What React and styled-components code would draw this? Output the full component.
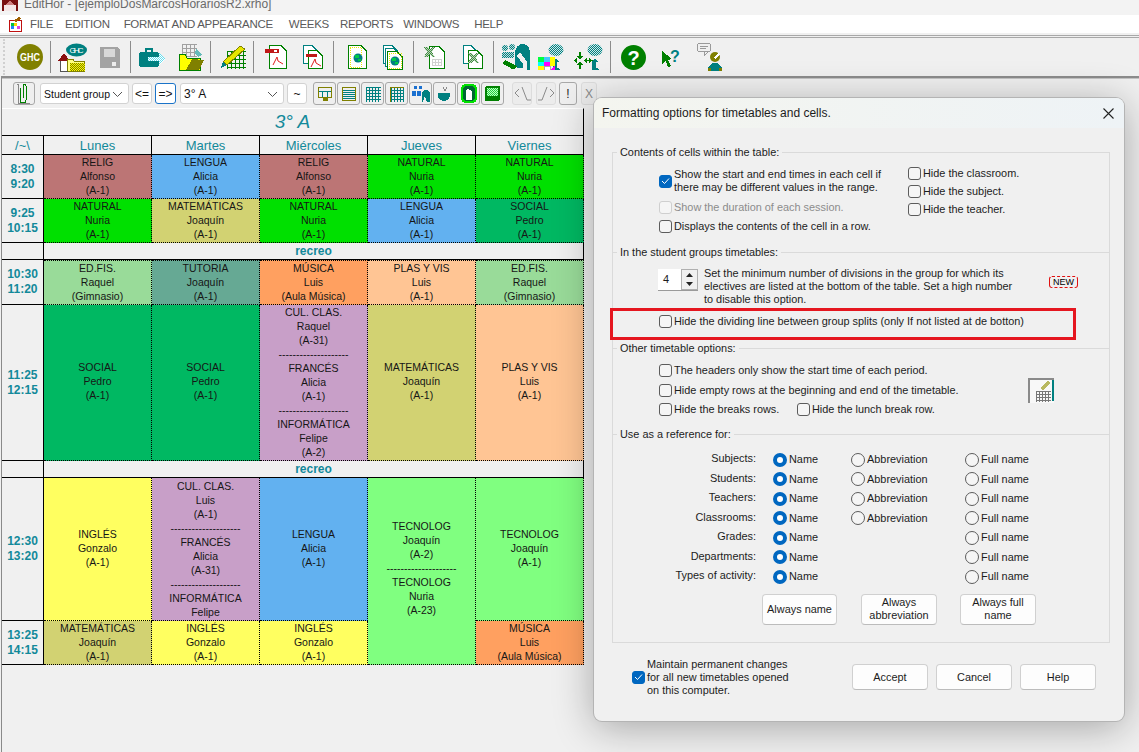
import React from "react";
import styled, { createGlobalStyle } from "styled-components";

const TEAL = "#008080";
const OLIVE = "#808000";
const GREEN = "#008000";
const FONT = '"Liberation Sans", Arial, sans-serif';

const GlobalStyle = createGlobalStyle`
  html, body { margin: 0; padding: 0; background: #f0f0f0; }
  * { box-sizing: border-box; }
`;

/* ---------- window chrome ---------- */
const Page = styled.div`
  position: relative;
  width: 1139px;
  height: 752px;
  overflow: hidden;
  background: #f0f0f0;
  font-family: ${FONT};
  display: flex;
  flex-direction: column;
`;

const TitleBar = styled.div`
  height: 15px;
  flex: none;
  background: #f3f3f3;
  display: flex;
  align-items: flex-start;
  gap: 6px;
  padding-left: 2px;
  overflow: hidden;
  color: #6a6a6a;
  font-size: 12px;
  line-height: 9px;
`;

const MenuBar = styled.div`
  height: 18px;
  flex: none;
  background: #fff;
  display: flex;
  align-items: center;
  padding-left: 8px;
  color: #5a5a5a;
  font-size: 11.5px;
  letter-spacing: -0.3px;
`;

const MenuItem = styled.span`
  margin-left: ${({ $ml }) => $ml}px;
  white-space: nowrap;
`;

const Rule = styled.div`
  height: 5px;
  flex: none;
  border-top: 2px solid #f0f0f0;
  border-bottom: 1px solid #a8a8a8;
  box-shadow: inset 0 1px 0 #a8a8a8;
`;

const MainBar = styled.div`
  height: 38px;
  flex: none;
  display: flex;
  align-items: center;
  padding-left: 3px;
`;

const Grip = styled.div`
  width: 14px;
  height: 36px;
  flex: none;
  border-left: 2px dotted #d0d0d0;
`;

const ToolGroup = styled.div`
  display: flex;
  align-items: center;
  gap: ${({ $gap }) => $gap || 0}px;
  padding: 0 ${({ $r }) => $r || 0}px 0 ${({ $l }) => $l}px;
`;

const ToolSep = styled.div`
  width: 1px;
  height: 32px;
  background: #8c8c8c;
  flex: none;
`;

const Frame = styled.div`
  flex: 1;
  margin-left: 1px;
  border-left: 1px solid #8a8a8a;
  border-top: 2px solid #8c8c8c;
  display: flex;
  flex-direction: column;
`;

const SmallBar = styled.div`
  height: 30px;
  flex: none;
  border-top: 1px solid #c4c4c4;
  display: flex;
  align-items: center;
  padding-left: 11px;
  font-size: 12px;
  color: #111;
`;

const IconButton = styled.div`
  width: ${({ $w }) => $w || 23}px;
  height: 23px;
  margin-left: ${({ $ml }) => $ml || 0}px;
  flex: none;
  border: 1px solid ${({ $soft }) => ($soft ? "#dcdcdc" : "#a8a8a8")};
  border-radius: 3px;
  background: ${({ $soft }) => ($soft ? "#ececec" : "#efefef")};
  color: ${({ $soft }) => ($soft ? "#8a8a8a" : "#222")};
  display: flex;
  align-items: center;
  justify-content: center;
`;

const Combo = styled.div`
  width: ${({ $w }) => $w}px;
  height: 21px;
  margin-left: ${({ $ml }) => $ml}px;
  flex: none;
  background: #fff;
  border: 1px solid #d2d2d2;
  border-radius: 3px;
  display: flex;
  align-items: center;
  padding-left: 3px;
  position: relative;
`;

const ComboText = styled.span`
  width: ${({ $w }) => $w}px;
  white-space: nowrap;
  font-size: ${({ $size }) => $size}px;
`;

const ComboArrow = styled.svg`
  position: absolute;
  right: 5px;
  top: 7px;
`;

const TextButton = styled.div`
  width: ${({ $w }) => $w}px;
  height: 21px;
  margin-left: ${({ $ml }) => $ml}px;
  flex: none;
  background: #fff;
  border: 1px solid ${({ $on }) => ($on ? "#1a73c8" : "#d2d2d2")};
  border-radius: 3px;
  display: flex;
  align-items: center;
  justify-content: center;
  font-size: 12px;
`;

/* ---------- timetable ---------- */
const Sheet = styled.div`
  display: grid;
  grid-template-columns: 42px repeat(5, 108px);
  grid-template-rows: 28px 19px 44px 44px 17px 45px 156px 17px 143px 44px;
  width: 582px;
`;

const SheetTitle = styled.div`
  grid-column: 1 / -1;
  border-top: 1px solid #fff;
  border-right: 1px solid #000;
  border-bottom: 1px solid #000;
  color: #12899a;
  font-size: 19px;
  font-style: italic;
  text-align: center;
  line-height: 25px;
`;

const HeadCell = styled.div`
  border-right: 1px solid #000;
  border-bottom: 1px solid #000;
  color: #12899a;
  font-size: 13px;
  line-height: 20px;
  text-align: center;
`;

const TimeCell = styled.div`
  border-right: 1px solid #000;
  border-bottom: 1px solid #000;
  color: #12899a;
  font-size: 12px;
  font-weight: 700;
  line-height: 15px;
  display: flex;
  align-items: center;
  justify-content: center;
  text-align: center;
`;

const BreakCell = styled.div`
  grid-column: span 5;
  border-right: 1px solid #000;
  border-bottom: 1px solid #000;
  color: #12899a;
  font-size: 12px;
  font-weight: 700;
  line-height: 17px;
  text-align: center;
`;

const Slot = styled.div`
  grid-row: span ${({ $rows }) => $rows || 1};
  background: ${({ $bg }) => $bg};
  border-right: 1px dotted #000;
  border-bottom: 1px dotted #000;
  border-top: ${({ $afterBreak }) => ($afterBreak ? "1px dotted #000" : "0")};
  display: flex;
  flex-direction: column;
  justify-content: ${({ $top }) => ($top ? "flex-start" : "center")};
  padding-top: ${({ $drop }) => $drop || 0}px;
  padding-bottom: ${({ $lift }) => $lift ?? 2}px;
  overflow: hidden;
  color: #161616;
  font-size: 10.5px;
  line-height: 14px;
  text-align: center;
  white-space: nowrap;
`;

/* ---------- dialog ---------- */
const Dialog = styled.div`
  position: absolute;
  left: 594px;
  top: 98px;
  width: 530px;
  height: 623px;
  background: #f0f0f0;
  border-radius: 8px;
  box-shadow: 0 0 0 1px #b4b4b4, 0 6px 40px rgba(0, 0, 0, 0.32);
  color: #1c1c1c;
  font-size: 10.9px;
  line-height: 13px;
  display: flex;
  flex-direction: column;
`;

const DialogHead = styled.div`
  height: 30px;
  flex: none;
  border-radius: 8px 8px 0 0;
  background: linear-gradient(90deg, #f4f5ef, #eef3f6);
  display: flex;
  align-items: center;
  justify-content: space-between;
  padding: 0 10px 0 8px;
  font-size: 12px;
`;

const Panel = styled.div`
  height: 491px;
  flex: none;
  margin: 24px 14px 0 18px;
  border: 1px solid #dadada;
  border-top: 0;
  display: flex;
  flex-direction: column;
`;

const Section = styled.div`
  position: relative;
  height: ${({ $h }) => $h}px;
  flex: none;
  border-top: 1px solid #dadada;
`;

const Legend = styled.span`
  position: absolute;
  left: 4px;
  top: -7px;
  padding: 0 3px;
  background: #f0f0f0;
  white-space: nowrap;
`;

const CellOptions = styled.div`
  display: flex;
  padding-left: 46px;
`;

const Stack = styled.div`
  width: ${({ $w }) => $w}px;
  padding-top: ${({ $pt }) => $pt}px;
  display: flex;
  flex-direction: column;
  gap: ${({ $gap }) => $gap}px;
`;

const Check = styled.div`
  display: flex;
  align-items: center;
  gap: 2px;
  flex: none;
  width: ${({ $w }) => ($w ? `${$w}px` : "auto")};
  white-space: nowrap;
  color: ${({ $off }) => ($off ? "#8c8c8c" : "inherit")};
`;

const Box = styled.span`
  width: 13px;
  height: 13px;
  flex: none;
  border-radius: 3px;
  border: 1px solid ${({ $on, $off }) => ($on ? "#0067c0" : $off ? "#cfcfcf" : "#5c5c5c")};
  background: ${({ $on }) => ($on ? "#0067c0" : "#f5f5f5")};
  display: flex;
  align-items: center;
  justify-content: center;
`;

const SplitBlock = styled.div`
  display: flex;
  padding: 14px 0 0 45px;
`;

const Spinner = styled.div`
  width: 40px;
  height: 22px;
  flex: none;
  margin-top: 2px;
  display: flex;
  background: #fff;
  border-bottom: 1px solid #9a9a9a;
`;

const SpinValue = styled.span`
  width: 23px;
  padding-left: 5px;
  font-size: 11px;
  line-height: 21px;
`;

const SpinButtons = styled.div`
  flex: 1;
  border: 1px solid #b0b0b0;
  background: #f0f0f0;
  display: flex;
  flex-direction: column;
  align-items: center;
  justify-content: space-around;
`;

const SplitText = styled.div`
  width: 345px;
  flex: none;
  margin-left: 6px;
  white-space: nowrap;
`;

const NewBadge = styled.span`
  width: 29px;
  height: 12px;
  margin-top: 9px;
  flex: none;
  border: 1px solid #e01010;
  border-top-style: dashed;
  border-bottom-style: dashed;
  border-radius: 3px;
  font-size: 9px;
  line-height: 10px;
  text-align: center;
  color: #000;
`;

const DividerOption = styled.div`
  padding: 9px 0 0 46px;
`;

const RedFrame = styled.div`
  position: absolute;
  left: 16px;
  top: 210px;
  width: 466px;
  height: 32px;
  border: 3px solid #e5161f;
`;

const OtherBlock = styled.div`
  display: flex;
  padding-left: 46px;
`;

const InlineChecks = styled.div`
  display: flex;
`;

const Picture = styled.div`
  margin-top: 29px;
  flex: none;
`;

const RefGrid = styled.div`
  display: grid;
  grid-template-columns: 143px 95px 114px 1fr;
  grid-auto-rows: 19.5px;
  padding-top: 15px;
  align-items: center;
  white-space: nowrap;
`;

const RefLabel = styled.span`
  grid-column: 1;
  text-align: right;
  margin-top: -2px;
`;

const Radio = styled.div`
  display: flex;
  align-items: center;
  gap: 2px;
  grid-column: ${({ $col }) => $col};
  margin-left: ${({ $col }) => ($col === 2 ? 17 : 0)}px;
`;

const Dot = styled.span`
  width: 14px;
  height: 14px;
  flex: none;
  border-radius: 50%;
  border: ${({ $on }) => ($on ? "4.5px solid #0067c0" : "1px solid #5c5c5c")};
  background: ${({ $on }) => ($on ? "#fff" : "#f5f5f5")};
`;

const AlwaysRow = styled.div`
  display: flex;
  margin: 7px 0 0 149px;
`;

const PushButton = styled.div`
  width: ${({ $w }) => $w}px;
  height: ${({ $h }) => $h}px;
  margin-right: ${({ $mr }) => $mr || 0}px;
  flex: none;
  background: #fdfdfd;
  border: 1px solid #d0d0d0;
  border-bottom-color: #bcbcbc;
  border-radius: 4px;
  display: flex;
  align-items: center;
  justify-content: center;
  text-align: center;
`;

const Footer = styled.div`
  height: 26px;
  margin-top: 21px;
  padding: 0 28px 0 38px;
  display: flex;
  align-items: center;
`;

const FooterButtons = styled.div`
  margin-left: auto;
  display: flex;
  gap: 8px;
`;

/* ---------- pixel icons ---------- */
const Px = ({ w, h, children }) => (
  <svg width={w} height={h} viewBox={`0 0 ${w} ${h}`} shapeRendering="crispEdges">
    {children}
  </svg>
);

const Dither = ({ id, a, b }) => (
  <pattern id={id} width="2" height="2" patternUnits="userSpaceOnUse">
    <rect width="2" height="2" fill={a} />
    <rect width="1" height="1" fill={b} />
    <rect x="1" y="1" width="1" height="1" fill={b} />
  </pattern>
);

const GridLines = ({ x, y, w, h, step, color }) => {
  const lines = [];
  for (let i = 0; i <= w; i += step) lines.push(<rect key={`v${i}`} x={x + i} y={y} width="1" height={h + 1} fill={color} />);
  for (let j = 0; j <= h; j += step) lines.push(<rect key={`h${j}`} x={x} y={y + j} width={w + 1} height="1" fill={color} />);
  return <>{lines}</>;
};

const Page0 = ({ x, y, w, h, line = GREEN, fill = "#fff" }) => (
  <path d={`M${x + 0.5} ${y + 0.5}H${x + w - 6}L${x + w - 0.5} ${y + 6}V${y + h - 0.5}H${x + 0.5}Z`} fill={fill} stroke={line} />
);

const GhcIcon = () => (
  <Px w={26} h={28}>
    <circle cx="13" cy="14" r="13" fill={OLIVE} shapeRendering="auto" />
    <text x="13" y="18" textAnchor="middle" fontSize="10" fontWeight="700" fill="#fff" fontFamily={FONT} textLength="20" lengthAdjust="spacingAndGlyphs">GHC</text>
  </Px>
);

const HomeIcon = () => (
  <Px w={29} h={29}>
    <defs><Dither id="homeD" a="#ffff00" b={OLIVE} /></defs>
    <ellipse cx="18.5" cy="7" rx="10.5" ry="6.5" fill={TEAL} shapeRendering="auto" />
    <text x="18.5" y="10" textAnchor="middle" fontSize="8" fill="#fff" fontFamily={FONT} textLength="14">GHC</text>
    <rect x="2" y="17" width="8" height="11" fill="#fff" stroke="#555" />
    <path d="M0 18L6 10L12 18Z" fill="#8a1010" />
    <path d="M9 16H15L16 18H26V28H10Z" fill="#ffff80" stroke={OLIVE} />
    <rect x="12" y="20" width="15" height="8" fill="url(#homeD)" />
  </Px>
);

const FloppyIcon = () => (
  <Px w={20} h={21}>
    <path d="M0 0H17L20 3V21H0Z" fill="#a3a3a3" />
    <rect x="4" y="2" width="11" height="8" fill="#d8d8d8" />
    <rect x="12" y="15" width="4" height="4" fill="#ededed" />
  </Px>
);

const CaseIcon = () => (
  <Px w={27} h={19}>
    <defs><Dither id="caseD" a="#66ddee" b="#ffffff" /></defs>
    <path d="M7 4V1H13V4" fill="none" stroke={TEAL} strokeWidth="2" />
    <rect x="0" y="4" width="20" height="15" rx="3" fill={TEAL} />
    <path d="M9 9H20V5L27 11L20 17V13H9Z" fill="url(#caseD)" />
  </Px>
);

const OpenGridIcon = () => (
  <Px w={26} h={27}>
    <GridLines x={4} y={0} w={14} h={12} step={4} color="#a0a0a0" />
    <path d="M18 5L24 11L20 13L17 9Z" fill="#66bbbb" />
    <path d="M1 10H7L9 14H22V26H1Z" fill="#ffff00" stroke={GREEN} />
    <path d="M8 26L14 15L26 16L21 26Z" fill={OLIVE} />
  </Px>
);

const PencilGridIcon = () => (
  <Px w={26} h={23}>
    <GridLines x={7} y={5} w={18} h={17} step={4} color={GREEN} />
    <path d="M20 0L25 3L7 19L3 16Z" fill="#e6e600" stroke={OLIVE} />
    <path d="M3 16L7 19L1 22Z" fill={TEAL} />
  </Px>
);

const PdfMark = ({ x, y }) => (
  <path d={`M${x} ${y + 8}L${x + 4} ${y}L${x + 5} ${y + 4}L${x + 10} ${y + 7}`} fill="none" stroke="#e02020" strokeWidth="1" shapeRendering="auto" />
);

const PdfIcon = () => (
  <Px w={22} h={24}>
    <Page0 x={4} y={0} w={18} h={24} />
    <rect x="0" y="4" width="14" height="4" fill="#c01818" />
    <rect x="9" y="5" width="3" height="2" fill="#fff" />
    <PdfMark x={8} y={12} />
  </Px>
);

const PdfStackIcon = () => (
  <Px w={20} h={24}>
    <Page0 x={0} y={0} w={15} h={19} line={TEAL} />
    <Page0 x={5} y={5} w={15} h={19} />
    <rect x="3" y="9" width="11" height="3" fill="#c01818" />
    <PdfMark x={8} y={14} />
  </Px>
);

const Globe = ({ cx, cy }) => (
  <>
    <circle cx={cx} cy={cy} r="4.5" fill={TEAL} shapeRendering="auto" />
    <rect x={cx - 3} y={cy - 3} width="4" height="3" fill="#00cc44" />
    <rect x={cx} y={cy + 1} width="3" height="2" fill="#00cc44" />
  </>
);

const DocGlobeIcon = () => (
  <Px w={19} h={24}>
    <Page0 x={0} y={0} w={19} h={24} line={GREEN} />
    <rect x="2" y="2" width="11" height="20" fill="none" stroke="#e8e800" strokeDasharray="1 1" />
    <Globe cx={10} cy={13} />
  </Px>
);

const DocStackIcon = () => (
  <Px w={20} h={25}>
    <Page0 x={0} y={0} w={15} h={19} line={TEAL} />
    <Page0 x={2} y={3} w={15} h={19} line={TEAL} />
    <Page0 x={4} y={6} w={16} h={19} line={GREEN} />
    <rect x="6" y="8" width="12" height="15" fill="none" stroke="#e8e800" strokeDasharray="1 1" />
    <Globe cx={12} cy={16} />
  </Px>
);

const XMark = ({ x, y }) => (
  <>
    <defs><Dither id={`xD${x}`} a="#448844" b="#b8d8b8" /></defs>
    <path d={`M${x} ${y}H${x + 4}L${x + 6} ${y + 3}L${x + 8} ${y}H${x + 11}L${x + 8} ${y + 5}L${x + 11} ${y + 10}H${x + 8}L${x + 6} ${y + 7}L${x + 3} ${y + 10}H${x}L${x + 3} ${y + 5}Z`} fill={`url(#xD${x})`} />
  </>
);

const ExcelIcon = () => (
  <Px w={21} h={23}>
    <Page0 x={5} y={0} w={16} h={23} />
    <GridLines x={8} y={13} w={9} h={6} step={3} color="#d0d0d0" />
    <XMark x={0} y={1} />
  </Px>
);

const ExcelStackIcon = () => (
  <Px w={20} h={24}>
    <Page0 x={0} y={0} w={14} h={19} line={TEAL} />
    <Page0 x={5} y={5} w={15} h={19} />
    <XMark x={5} y={8} />
  </Px>
);

const PeopleIcon = () => (
  <Px w={28} h={26}>
    <defs><Dither id="pplD" a={TEAL} b="#c0dcdc" /></defs>
    <circle cx="3" cy="4" r="3" fill="url(#pplD)" shapeRendering="auto" />
    <circle cx="10" cy="3" r="3" fill="url(#pplD)" shapeRendering="auto" />
    <rect x="0" y="8" width="12" height="6" rx="2" fill="url(#pplD)" />
    <path d="M13 20V9C13 3 17 0 21 0C26 0 28 5 28 10V26H25V18L18 8L15 12L21 20V24H15Z" fill={TEAL} />
    <path d="M0 19L3 16L15 22L13 25H10Z" fill={GREEN} />
  </Px>
);

const TreeMark = ({ x }) => (
  <>
    <defs><Dither id={`treeD${x}`} a={TEAL} b="#d0e8e8" /></defs>
    <ellipse cx={x} cy="6" rx="7.5" ry="6" fill={`url(#treeD${x})`} shapeRendering="auto" />
    <path d={`M${x - 3} 18L${x} 14L${x + 3} 18H${x + 1}V24L${x + 4} 25V26H${x - 3}V18Z`} fill={TEAL} />
  </>
);

const ColorTreeIcon = () => (
  <Px w={28} h={26}>
    <TreeMark x={18} />
    <rect x="0" y="13" width="6" height="5" fill="#00ff40" />
    <rect x="6" y="13" width="6" height="5" fill="#40c8ff" />
    <rect x="12" y="13" width="5" height="5" fill="#ffff00" />
    <rect x="0" y="18" width="6" height="4" fill="#00ffff" />
    <rect x="6" y="18" width="6" height="4" fill="#ff00ff" />
    <rect x="12" y="18" width="5" height="4" fill="#ffff00" />
    <rect x="0" y="22" width="6" height="4" fill="#ffff00" />
    <rect x="6" y="22" width="6" height="4" fill="#fff" stroke="#aaa" />
    <path d="M12 26L17 22V26Z" fill="#ff00ff" />
  </Px>
);

const ArrowTreeIcon = () => (
  <Px w={30} h={26}>
    <TreeMark x={21} />
    <path d="M5 8H7V12H9L6 16L3 12H5ZM5 25H7V21H9L6 17L3 21H5Z" fill={GREEN} />
    <path d="M0 16.5L3 14V19ZM13 14V19L10 16.5ZM13 16H15V17H13ZM19 16.5L15 14V19Z" fill={GREEN} />
  </Px>
);

const HelpIcon = () => (
  <Px w={25} h={25}>
    <circle cx="12.5" cy="12.5" r="12.5" fill={GREEN} shapeRendering="auto" />
    <text x="12.5" y="20" textAnchor="middle" fontSize="20" fontWeight="700" fill="#fff" fontFamily={FONT}>?</text>
  </Px>
);

const ArrowHelpIcon = () => (
  <Px w={19} h={19}>
    <path d="M0 3L10 11L6 12L9 18L6 19L4 13L0 16Z" fill={GREEN} />
    <text x="13" y="14" textAnchor="middle" fontSize="16" fontWeight="700" fill={TEAL} fontFamily={FONT}>?</text>
  </Px>
);

const PersonIcon = () => (
  <Px w={27} h={28}>
    <rect x="0.5" y="0.5" width="13" height="8" rx="2" fill="#f0f0f0" stroke="#9a9a9a" />
    <rect x="3" y="3" width="8" height="1" fill="#9a9a9a" />
    <rect x="3" y="5" width="6" height="1" fill="#9a9a9a" />
    <path d="M7 8V13L11 9Z" fill="#f0f0f0" stroke="#9a9a9a" />
    <circle cx="18" cy="14" r="5" fill={OLIVE} shapeRendering="auto" />
    <path d="M17 14L22 10L23 12L18 16Z" fill="#fff" />
    <path d="M11 28V24L16 20H20L25 24V28Z" fill={TEAL} />
    <rect x="11" y="25" width="3" height="3" fill={OLIVE} />
    <rect x="22" y="25" width="3" height="3" fill={OLIVE} />
  </Px>
);

const MenuGlyph = () => (
  <Px w={15} h={15}>
    <path d="M1 3H13V14H1Z" fill="#fff" stroke="#c01010" />
    <rect x="3" y="6" width="3" height="3" fill="#00c040" />
    <rect x="6" y="6" width="3" height="3" fill="#ffd000" />
    <rect x="3" y="9" width="3" height="3" fill="#2080ff" />
    <rect x="9" y="9" width="3" height="3" fill="#e040e0" />
    <path d="M5 4L11 0L13 2L8 5Z" fill="#a06000" />
  </Px>
);

const AppGlyph = () => (
  <Px w={16} h={15}>
    <rect width="16" height="11" fill="#7a1010" />
    <rect x="2" y="5" width="12" height="6" fill="#f5e6e6" />
    <path d="M3 5L8 1L13 5Z" fill="#d08080" />
  </Px>
);

/* small toolbar glyphs */
const ClipGlyph = () => (
  <Px w={14} h={20}>
    <path d="M3 4V16C3 20 9 20 9 16V2C9 0 6 0 6 2V14" fill="none" stroke={GREEN} />
    <path d="M0 0H1V19H13" fill="none" stroke="#888" />
  </Px>
);

const TableGlyph = ({ kind }) => (
  <Px w={16} h={16}>
    {kind === "head" && (
      <>
        <rect x="1.5" y="1.5" width="13" height="10" fill="none" stroke={OLIVE} />
        <rect x="2" y="5" width="12" height="1" fill={TEAL} />
        <rect x="5" y="6" width="1" height="5" fill={TEAL} />
        <rect x="10" y="6" width="1" height="5" fill={TEAL} />
        <rect x="6" y="12" width="5" height="3" fill={OLIVE} />
      </>
    )}
    {kind === "lines" && (
      <>
        <rect x="1.5" y="1.5" width="13" height="13" fill="none" stroke={OLIVE} />
        {[4, 6, 8, 10, 12].map((y) => <rect key={y} x="2" y={y} width="12" height="1" fill={TEAL} />)}
      </>
    )}
    {kind === "grid" && <GridLines x={1} y={1} w={14} h={14} step={3} color={TEAL} />}
    {kind === "grid2" && (
      <>
        <GridLines x={2} y={1} w={12} h={14} step={3} color={TEAL} />
        <rect x="1" y="1" width="1" height="15" fill={OLIVE} />
        <rect x="1" y="1" width="14" height="1" fill={OLIVE} />
      </>
    )}
  </Px>
);

const TeamGlyph = () => (
  <Px w={20} h={18}>
    <rect x="3" y="1" width="3" height="3" fill="#1a70d0" />
    <rect x="8" y="1" width="3" height="3" fill="#1a70d0" />
    <rect x="1" y="6" width="4" height="5" fill="#1a70d0" />
    <rect x="6" y="6" width="4" height="5" fill="#1a70d0" />
    <path d="M11 17V8C11 4 19 4 19 9V17H16L14 11L12 17Z" fill={TEAL} />
  </Px>
);

const CupGlyph = () => (
  <Px w={16} h={16}>
    <path d="M6 1L8 5M10 1L8 5" stroke="#888" fill="none" />
    <path d="M1 7H13V9C13 13 10 15 7 15C4 15 1 13 1 9Z" fill={TEAL} />
  </Px>
);

const HeadGlyph = () => (
  <Px w={18} h={19}>
    <rect x="1" y="0" width="16" height="19" rx="5" fill="#00e000" />
    <rect x="3" y="2" width="12" height="15" rx="4" fill="#063" />
    <path d="M6 16V7C6 4 12 5 12 9V16Z" fill="#fff" />
  </Px>
);

const ScreenGlyph = () => (
  <Px w={17} h={17}>
    <defs><Dither id="scrD" a="#20d040" b="#c0ffc0" /></defs>
    <rect x="1" y="1" width="15" height="15" rx="2" fill={GREEN} />
    <rect x="3" y="3" width="11" height="8" fill="url(#scrD)" />
  </Px>
);

const LeftLean = () => (
  <Px w={17} h={15}>
    <path d="M5 3L1 7L5 11M8 1L13 14H17" fill="none" stroke="#8a8a8a" shapeRendering="auto" />
  </Px>
);

const RightLean = () => (
  <Px w={17} h={15}>
    <path d="M0 14H4L9 1M12 3L16 7L12 11" fill="none" stroke="#8a8a8a" shapeRendering="auto" />
  </Px>
);

const ChevronDown = () => (
  <ComboArrow width="11" height="7" viewBox="0 0 11 7">
    <path d="M1 1L5.5 5.5L10 1" fill="none" stroke="#555" />
  </ComboArrow>
);

const Tick = () => (
  <svg width="9" height="8" viewBox="0 0 9 8">
    <path d="M1 4L3.5 6.5L8 1.5" fill="none" stroke="#fff" strokeWidth="1" />
  </svg>
);

const Arrow = ({ up }) => (
  <svg width="7" height="4" viewBox="0 0 7 4">
    <path d={up ? "M0 4L3.5 0L7 4Z" : "M0 0L3.5 4L7 0Z"} fill="#222" />
  </svg>
);

const FormatPicture = () => (
  <Px w={26} h={25}>
    <rect width="26" height="25" fill="#f8f8f8" />
    <path d="M0 25V0H26V2H2V25Z" fill="#8a8a8a" />
    <path d="M24 2H26V23H24Z" fill={TEAL} />
    <path d="M12 10L20 3L23 5L15 12Z" fill="#b8b860" />
    <GridLines x={8} y={13} w={14} h={10} step={3} color="#777" />
  </Px>
);

/* ---------- data ---------- */
const C = {
  relig: "#bc7575",
  lengua: "#62b1f0",
  natural: "#00e000",
  mate: "#d2d272",
  social: "#00b862",
  edfis: "#99db99",
  tutoria: "#66a994",
  musica: "#ffa060",
  plas: "#ffc594",
  cul: "#c89fc8",
  ingles: "#ffff60",
  tecno: "#80ff80",
};

const DASH = "--------------------";
const L = {
  relig: ["RELIG", "Alfonso", "(A-1)"],
  lengua: ["LENGUA", "Alicia", "(A-1)"],
  natural: ["NATURAL", "Nuria", "(A-1)"],
  mate: ["MATEMÁTICAS", "Joaquín", "(A-1)"],
  social: ["SOCIAL", "Pedro", "(A-1)"],
  edfis: ["ED.FIS.", "Raquel", "(Gimnasio)"],
  tutoria: ["TUTORIA", "Joaquín", "(A-1)"],
  musica: ["MÚSICA", "Luis", "(Aula Música)"],
  plas: ["PLAS Y VIS", "Luis", "(A-1)"],
  ingles: ["INGLÉS", "Gonzalo", "(A-1)"],
  tecno: ["TECNOLOG", "Joaquín", "(A-1)"],
};

const days = ["Lunes", "Martes", "Miércoles", "Jueves", "Viernes"];

const block1 = [
  { time: ["8:30", "9:20"], cells: ["relig", "lengua", "relig", "natural", "natural"] },
  { time: ["9:25", "10:15"], cells: ["natural", "mate", "natural", "lengua", "social"] },
];

const culWide = ["CUL. CLAS.", "Raquel", "(A-31)", DASH, "FRANCÉS", "Alicia", "(A-1)", DASH, "INFORMÁTICA", "Felipe", "(A-2)"];
const culCut = ["CUL. CLAS.", "Luis", "(A-1)", DASH, "FRANCÉS", "Alicia", "(A-31)", DASH, "INFORMÁTICA", "Felipe"];
const tecnoSplit = ["TECNOLOG", "Joaquín", "(A-2)", DASH, "TECNOLOG", "Nuria", "(A-23)"];

const checksLeftTail = [
  { text: "Show the duration of each session.", off: true },
  { text: "Displays the contents of the cell in a row." },
];
const checksRight = ["Hide the classroom.", "Hide the subject.", "Hide the teacher."];

const refs = [
  ["Subjects:", true],
  ["Students:", true],
  ["Teachers:", true],
  ["Classrooms:", true],
  ["Grades:", false],
  ["Departments:", false],
  ["Types of activity:", false],
];

/* ---------- small pieces ---------- */
const Lines = ({ items }) => items.map((line, i) => <div key={i}>{line}</div>);

const Lesson = ({ k, ...rest }) => (
  <Slot $bg={C[k]} {...rest}>
    <Lines items={L[k]} />
  </Slot>
);

const Time = ({ pair }) => (
  <TimeCell>
    <div>
      {pair[0]}
      <br />
      {pair[1]}
    </div>
  </TimeCell>
);

const Option = ({ on, off, w, children }) => (
  <Check $off={off} $w={w}>
    <Box $on={on} $off={off}>{on && <Tick />}</Box>
    <span>{children}</span>
  </Check>
);

const Choice = ({ col, on, children }) => (
  <Radio $col={col}>
    <Dot $on={on} />
    <span>{children}</span>
  </Radio>
);

/* ---------- page ---------- */
export default function App() {
  return (
    <Page>
      <GlobalStyle />
      <TitleBar>
        <AppGlyph />
        <span>EditHor - [ejemploDosMarcosHorariosR2.xrho]</span>
      </TitleBar>

      <MenuBar>
        <MenuGlyph />
        <MenuItem $ml={7}>FILE</MenuItem>
        <MenuItem $ml={12}>EDITION</MenuItem>
        <MenuItem $ml={14}>FORMAT AND APPEARANCE</MenuItem>
        <MenuItem $ml={16}>WEEKS</MenuItem>
        <MenuItem $ml={11}>REPORTS</MenuItem>
        <MenuItem $ml={10}>WINDOWS</MenuItem>
        <MenuItem $ml={15}>HELP</MenuItem>
      </MenuBar>

      <Rule />

      <MainBar>
        <Grip />
        <ToolGroup $l={0} $r={7}><GhcIcon /></ToolGroup>
        <ToolSep />
        <ToolGroup $l={7} $r={10} $gap={13}><HomeIcon /><FloppyIcon /></ToolGroup>
        <ToolSep />
        <ToolGroup $l={8} $r={6} $gap={12}><CaseIcon /><OpenGridIcon /></ToolGroup>
        <ToolSep />
        <ToolGroup $l={9} $r={7}><PencilGridIcon /></ToolGroup>
        <ToolSep />
        <ToolGroup $l={11} $r={10} $gap={16}><PdfIcon /><PdfStackIcon /></ToolGroup>
        <ToolSep />
        <ToolGroup $l={14} $r={10} $gap={16}><DocGlobeIcon /><DocStackIcon /></ToolGroup>
        <ToolSep />
        <ToolGroup $l={10} $r={10} $gap={18}><ExcelIcon /><ExcelStackIcon /></ToolGroup>
        <ToolSep />
        <ToolGroup $l={8} $r={6} $gap={8}><PeopleIcon /><ColorTreeIcon /><ArrowTreeIcon /></ToolGroup>
        <ToolSep />
        <ToolGroup $l={10} $gap={16}><HelpIcon /><ArrowHelpIcon /><PersonIcon /></ToolGroup>
      </MainBar>

      <Frame>
        <SmallBar>
          <IconButton $w={22}><ClipGlyph /></IconButton>
          <Combo $w={89} $ml={5}>
            <ComboText $w={68} $size={10.5}>Student group</ComboText>
            <ChevronDown />
          </Combo>
          <TextButton $w={20} $ml={3}>&lt;=</TextButton>
          <TextButton $on $w={21} $ml={3}>=&gt;</TextButton>
          <Combo $w={104} $ml={4}>
            <ComboText $w={60} $size={12}>3° A</ComboText>
            <ChevronDown />
          </Combo>
          <TextButton $w={20} $ml={3}>~</TextButton>
          <IconButton $ml={6}><TableGlyph kind="head" /></IconButton>
          <IconButton $ml={1}><TableGlyph kind="lines" /></IconButton>
          <IconButton $ml={1}><TableGlyph kind="grid" /></IconButton>
          <IconButton $ml={1}><TableGlyph kind="grid2" /></IconButton>
          <IconButton $ml={1}><TeamGlyph /></IconButton>
          <IconButton $ml={1}><CupGlyph /></IconButton>
          <IconButton $ml={1}><HeadGlyph /></IconButton>
          <IconButton $ml={1}><ScreenGlyph /></IconButton>
          <IconButton $soft $w={20} $ml={8}><LeftLean /></IconButton>
          <IconButton $soft $w={20} $ml={4}><RightLean /></IconButton>
          <IconButton $w={18} $ml={3}>!</IconButton>
          <IconButton $soft $w={16} $ml={4}>X</IconButton>
        </SmallBar>

        <Sheet>
          <SheetTitle>3° A</SheetTitle>
          <HeadCell>/~\</HeadCell>
          {days.map((d) => (
            <HeadCell key={d}>{d}</HeadCell>
          ))}

          {block1.map((row) => (
            <React.Fragment key={row.time[0]}>
              <Time pair={row.time} />
              {row.cells.map((k, i) => (
                <Lesson key={i} k={k} $lift={1} />
              ))}
            </React.Fragment>
          ))}

          <TimeCell />
          <BreakCell>recreo</BreakCell>

          <Time pair={["10:30", "11:20"]} />
          <Lesson k="edfis" $lift={1} $afterBreak />
          <Lesson k="tutoria" $lift={1} $afterBreak />
          <Lesson k="musica" $lift={1} $afterBreak />
          <Lesson k="plas" $lift={1} $afterBreak />
          <Lesson k="edfis" $lift={1} $afterBreak />

          <Time pair={["11:25", "12:15"]} />
          <Lesson k="social" $lift={4} />
          <Lesson k="social" $lift={4} />
          <Slot $bg={C.cul} $top>
            <Lines items={culWide} />
          </Slot>
          <Lesson k="mate" $lift={4} />
          <Lesson k="plas" $lift={4} />

          <TimeCell />
          <BreakCell>recreo</BreakCell>

          <Time pair={["12:30", "13:20"]} />
          <Lesson k="ingles" />
          <Slot $bg={C.cul} $top $drop={1}>
            <Lines items={culCut} />
          </Slot>
          <Lesson k="lengua" />
          <Slot $bg={C.tecno} $rows={2} $lift={6}>
            <Lines items={tecnoSplit} />
          </Slot>
          <Lesson k="tecno" />

          <Time pair={["13:25", "14:15"]} />
          <Lesson k="mate" $lift={1} />
          <Lesson k="ingles" $lift={1} />
          <Lesson k="ingles" $lift={1} />
          <Lesson k="musica" $lift={1} />
        </Sheet>
      </Frame>

      <Dialog>
        <DialogHead>
          <span>Formatting options for timetables and cells.</span>
          <svg width="11" height="11" viewBox="0 0 11 11">
            <path d="M0.5 0.5L10.5 10.5M10.5 0.5L0.5 10.5" stroke="#222" strokeWidth="1.1" />
          </svg>
        </DialogHead>

        <Panel>
          <Section $h={100}>
            <Legend>Contents of cells within the table:</Legend>
            <CellOptions>
              <Stack $w={249} $pt={15} $gap={6.5}>
                <Option on>
                  Show the start and end times in each cell if
                  <br />
                  there may be different values in the range.
                </Option>
                {checksLeftTail.map((c) => (
                  <Option key={c.text} off={c.off}>{c.text}</Option>
                ))}
              </Stack>
              <Stack $pt={14} $gap={5}>
                {checksRight.map((t) => (
                  <Option key={t}>{t}</Option>
                ))}
              </Stack>
            </CellOptions>
          </Section>

          <Section $h={96}>
            <Legend>In the student groups timetables:</Legend>
            <SplitBlock>
              <Spinner>
                <SpinValue>4</SpinValue>
                <SpinButtons>
                  <Arrow up />
                  <Arrow />
                </SpinButtons>
              </Spinner>
              <SplitText>
                Set the minimum number of divisions in the group for which its
                <br />
                electives are listed at the bottom of the table. Set a high number
                <br />
                to disable this option.
              </SplitText>
              <NewBadge>NEW</NewBadge>
            </SplitBlock>
            <DividerOption>
              <Option>Hide the dividing line between group splits (only If not listed at de botton)</Option>
            </DividerOption>
          </Section>

          <Section $h={86}>
            <Legend>Other timetable options:</Legend>
            <OtherBlock>
              <Stack $w={369} $pt={15} $gap={6.5}>
                <Option>The headers only show the start time of each period.</Option>
                <Option>Hide empty rows at the beginning and end of the timetable.</Option>
                <InlineChecks>
                  <Option w={138}>Hide the breaks rows.</Option>
                  <Option>Hide the lunch break row.</Option>
                </InlineChecks>
              </Stack>
              <Picture>
                <FormatPicture />
              </Picture>
            </OtherBlock>
          </Section>

          <Section $h={208}>
            <Legend>Use as a reference for:</Legend>
            <RefGrid>
              {refs.map(([label, hasAbbr]) => (
                <React.Fragment key={label}>
                  <RefLabel>{label}</RefLabel>
                  <Choice col={2} on>Name</Choice>
                  {hasAbbr && <Choice col={3}>Abbreviation</Choice>}
                  <Choice col={4}>Full name</Choice>
                </React.Fragment>
              ))}
            </RefGrid>
            <AlwaysRow>
              <PushButton $w={75} $h={31} $mr={24}>Always name</PushButton>
              <PushButton $w={76} $h={31} $mr={23}>Always<br />abbreviation</PushButton>
              <PushButton $w={76} $h={31}>Always full<br />name</PushButton>
            </AlwaysRow>
          </Section>
        </Panel>

        <Footer>
          <Option on>
            Maintain permanent changes
            <br />
            for all new timetables opened
            <br />
            on this computer.
          </Option>
          <FooterButtons>
            <PushButton $w={76} $h={26}>Accept</PushButton>
            <PushButton $w={76} $h={26}>Cancel</PushButton>
            <PushButton $w={76} $h={26}>Help</PushButton>
          </FooterButtons>
        </Footer>

        <RedFrame />
      </Dialog>
    </Page>
  );
}
